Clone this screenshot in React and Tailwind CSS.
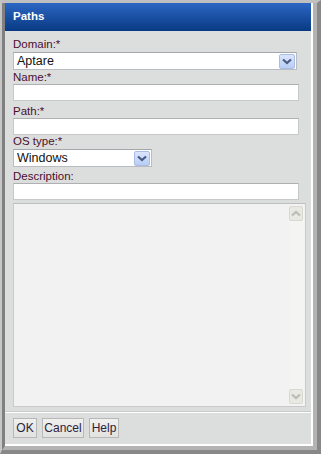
import React from "react";

const FONT = { fontFamily: '"Liberation Sans", Arial, sans-serif' };

function Chevron({ color = "#4a5a82" }) {
  return (
    <svg width="10" height="7" viewBox="0 0 10 7">
      <path d="M1 1.5 L5 5 L9 1.5" fill="none" stroke={color} strokeWidth="2.2" />
    </svg>
  );
}

function Select({ value, className }) {
  return (
    <div className={`flex h-[18px] items-center border border-[#b9bcc0] border-t-[#a3a6aa] bg-white pl-[3px] pr-[1px] ${className}`}>
      <span className="flex-1 text-[12.5px] leading-none text-[#111]">{value}</span>
      <span className="flex h-[15px] w-[16px] items-center justify-center rounded-[2px] border border-[#a9bde4] bg-gradient-to-b from-[#dbe6fd] to-[#b9cdf5]">
        <Chevron />
      </span>
    </div>
  );
}

function Label({ children, className = "" }) {
  return <div className={`text-[11.5px] leading-[12px] text-[#4b0f2e] ${className}`}>{children}</div>;
}

function Input({ className = "" }) {
  return <div className={`h-[17px] w-[286px] border border-[#c6c8ca] border-t-[#aeb0b3] bg-white ${className}`} />;
}

function ScrollBtn({ up }) {
  return (
    <div className="flex h-[15px] w-[14px] items-center justify-center rounded-[2px] border border-[#d9d9d2] bg-[#e9e9e4]">
      <svg width="10" height="7" viewBox="0 0 10 7" className={up ? "rotate-180" : ""}>
        <path d="M1 1.5 L5 5 L9 1.5" fill="none" stroke="#bcbcb6" strokeWidth="2.2" />
      </svg>
    </div>
  );
}

function Button({ children, className = "" }) {
  return (
    <div className={`flex h-[20px] items-center justify-center border border-[#b8b8b8] bg-gradient-to-b from-[#f0f0ee] to-[#e2e2e0] text-[12px] text-[#2b2340] ${className}`}>
      {children}
    </div>
  );
}

export default function App() {
  return (
    <div style={FONT} className="h-[454px] w-[321px] border-l-2 border-t-[3px] border-r-4 border-b-4 border-l-[#c6c6c6] border-t-[#c0c0c0] border-r-[#888] border-b-[#888] bg-[#c0c0c0]">
      <div className="flex h-full flex-col border-l-[3px] border-r-4 border-b-4 border-l-[#808080] border-r-[#b3b3b3] border-b-[#b3b3b3]">
        <div className="flex h-full flex-col border-r-2 border-b-2 border-white bg-[#dcdedd]">
          <div className="flex h-[28px] items-center bg-gradient-to-b from-[#2c67c4] to-[#083a83] pl-[8px] text-[11.5px] font-bold text-white">
            Paths
          </div>
          <div className="flex flex-1 flex-col pl-[8px]">
            <Label className="mt-[7px]">Domain:*</Label>
            <Select value="Aptare" className="mt-[2px] w-[284px]" />
            <Label className="mt-[1px]">Name:*</Label>
            <Input className="mt-[1px]" />
            <Label className="mt-[4px]">Path:*</Label>
            <Input className="mt-[1px]" />
            <Label className="mt-[0px]">OS type:*</Label>
            <Select value="Windows" className="mt-[2px] w-[139px]" />
            <Label className="mt-[3px]">Description:</Label>
            <Input className="mt-[1px]" />
            <div className="mt-[3px] flex h-[204px] w-[293px] justify-end border border-[#cacaca] border-t-[#bdbdbd] bg-[#f2f2f2] p-[1px]">
              <div className="flex w-[15px] flex-col justify-between bg-[#f4f4f2] py-[1px]">
                <ScrollBtn up />
                <ScrollBtn />
              </div>
            </div>
          </div>
          <div className="mt-[4px] border-t border-[#c9cbca]">
            <div className="flex gap-[5px] border-t border-white pb-[6px] pl-[8px] pt-[5px]">
              <Button className="w-[24px]">OK</Button>
              <Button className="w-[42px]">Cancel</Button>
              <Button className="w-[30px]">Help</Button>
            </div>
          </div>
        </div>
      </div>
    </div>
  );
}
